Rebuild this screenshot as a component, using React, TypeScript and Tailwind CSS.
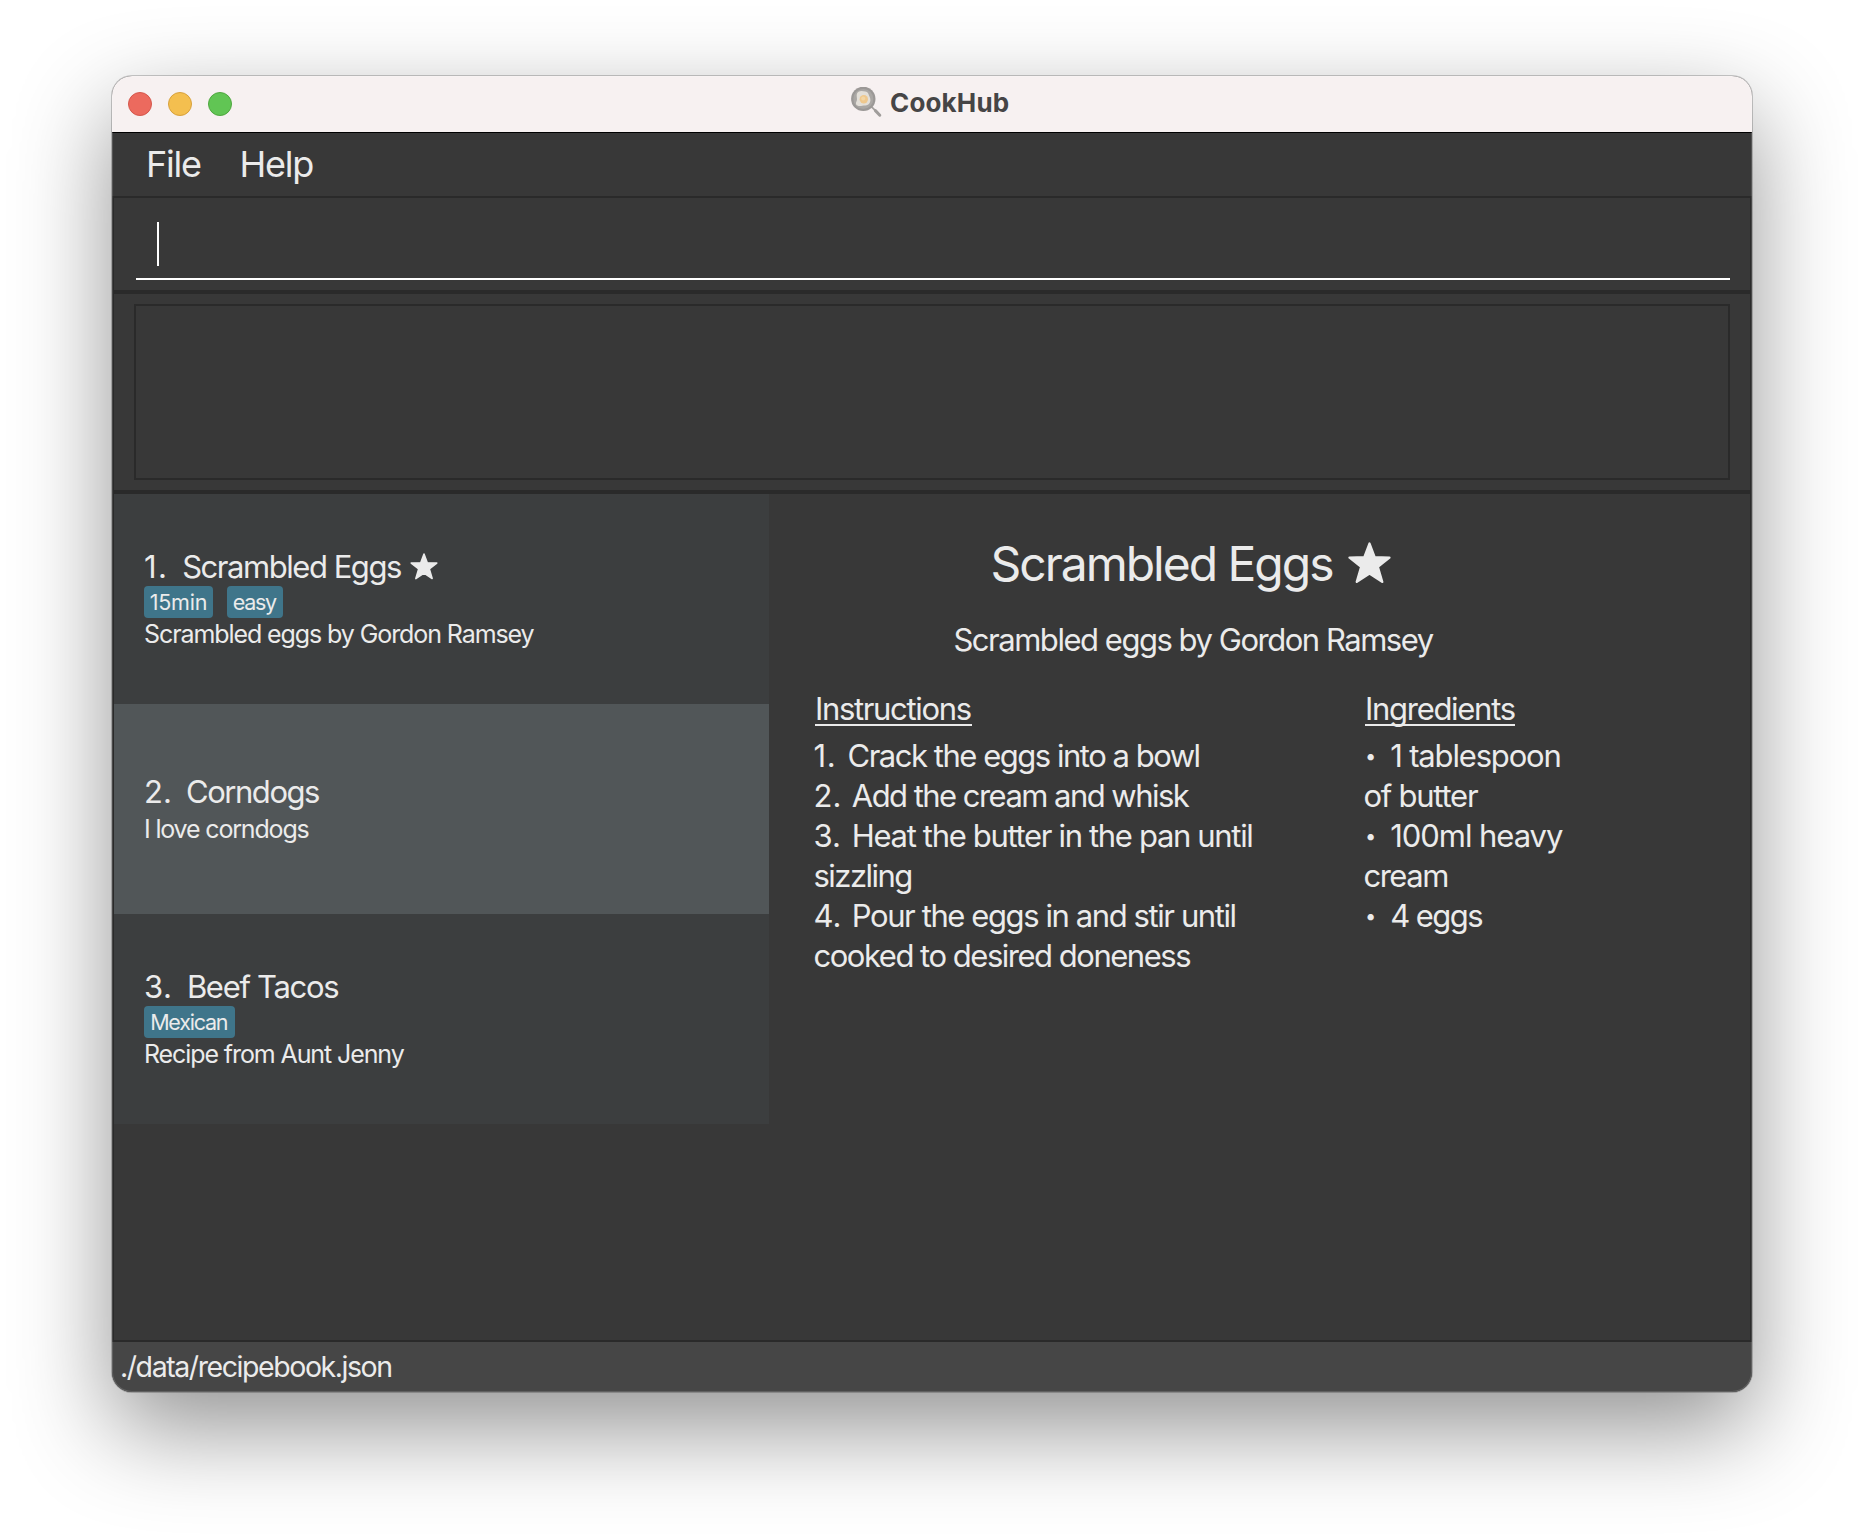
function Star({ className }: { className: string }) {
  return (
    <svg viewBox="0 0 43 42" className={className} fill="currentColor" stroke="currentColor" strokeWidth="2.4" strokeLinejoin="round">
      <path d="M21.5 1.6 26.6 15.2 41.4 15.6 29.8 24.8 34.2 39.8 21.5 31.4 8.800 39.8 13.2 24.8 1.6 15.6 16.4 15.2Z" />
    </svg>
  );
}

function PanIcon() {
  return (
    <svg viewBox="0 0 32 32" className="h-8 w-8">
      <path d="M21.4 19.6 25.600 23.800" stroke="#a3a09e" strokeWidth="1.8" />
      <path d="M25.400 23.600 29.800 28.200" stroke="#a09d9b" strokeWidth="3" strokeLinecap="round" />
      <circle cx="13.3" cy="11.9" r="12.2" fill="#9b9896" />
      <circle cx="13.3" cy="11.9" r="10" fill="#aaa7a4" />
      <path d="M8.500 4.800C10.500 3.400 13.500 4.200 15.300 4.600 18.500 5.200 18.600 7.500 19.500 9.600 20.800 12.300 20.800 15 19 16.900 17 18.800 14.500 18.200 12.200 18.800 9.800 19.400 6.600 19.200 6 17 5.500 15.100 7.100 14.200 7 11.900 6.900 9.500 5.900 6.700 8.500 4.800Z" fill="#e3dfd8" />
      <circle cx="13.800" cy="12.300" r="4.200" fill="#efc88d" />
      <circle cx="13.200" cy="11.600" r="2" fill="#f3d6a4" />
    </svg>
  );
}

const recipes = [
  {
    id: "1.", idClass: "w-[38.2px] tracking-[1.3px]", name: "Scrambled Eggs", nameClass: "tracking-[-1.46px]", star: true, bg: "bg-[#3c3e3f]",
    tags: [
      { label: "15min", cls: "w-[69px] pl-[5.7px] tracking-[-0.21px]" },
      { label: "easy", cls: "w-14 pl-[5.7px] tracking-[-1.29px]" },
    ],
    desc: "Scrambled eggs by Gordon Ramsey", descClass: "tracking-[-1.09px]",
  },
  {
    id: "2.", idClass: "w-[42px]", name: "Corndogs", nameClass: "tracking-[-1.46px]", star: false, bg: "bg-[#515658]",
    tags: [], desc: "I love corndogs", descClass: "tracking-[-1.17px]",
  },
  {
    id: "3.", idClass: "w-[42.9px] tracking-[0.5px]", name: "Beef Tacos", nameClass: "tracking-[-1.31px]", star: false, bg: "bg-[#3c3e3f]",
    tags: [{ label: "Mexican", cls: "w-[91px] pl-[6.2px] tracking-[-1.24px]" }],
    desc: "Recipe from Aunt Jenny", descClass: "tracking-[-1.1px]",
  },
];

const instructions = [
  { n: "1.", nClass: "w-[34px] tracking-[0.7px]", text: "Crack the eggs into a bowl", cls: "tracking-[-1.48px]" },
  { n: "2.", nClass: "w-[38.3px]", text: "Add the cream and whisk", cls: "tracking-[-1.54px]" },
  { n: "3.", nClass: "w-[38.3px]", text: "Heat the butter in the pan until", cls: "tracking-[-1.33px]" },
  { n: "", nClass: "", text: "sizzling", cls: "tracking-[-1.52px]" },
  { n: "4.", nClass: "w-[38.3px]", text: "Pour the eggs in and stir until", cls: "tracking-[-1.41px]" },
  { n: "", nClass: "", text: "cooked to desired doneness", cls: "tracking-[-1.48px]" },
];

const ingredients = [
  { bullet: true, text: "1 tablespoon", cls: "tracking-[-1.16px]" },
  { bullet: false, text: "of butter", cls: "tracking-[-1.25px]" },
  { bullet: true, text: "100ml heavy", cls: "tracking-[-1.04px]" },
  { bullet: false, text: "cream", cls: "tracking-[-1.5px]" },
  { bullet: true, text: "4 eggs", cls: "tracking-[-1.55px]" },
];

export default function App() {
  return (
    <div className="h-[1540px] w-[1864px] overflow-hidden bg-white px-28 pt-[76px] font-[Inter,sans-serif] text-[#ebebeb]">
      <div className="relative flex h-[1316px] w-[1640px] flex-col rounded-[20px] bg-[#383838] shadow-[0_0_0_1px_rgba(0,0,0,0.2),0_36px_96px_rgba(0,0,0,0.43)]">
        <header className="relative flex h-[57px] items-start justify-center rounded-t-[20px] border-b border-black bg-[#f7f1f1]">
          <div className="absolute left-4 top-4 flex gap-4">
            <span className="h-6 w-6 rounded-full border border-[#d5574c] bg-[#ec6a5e]" />
            <span className="h-6 w-6 rounded-full border border-[#d8a13c] bg-[#f4bf4f]" />
            <span className="h-6 w-6 rounded-full border border-[#4fa73f] bg-[#61c554]" />
          </div>
          <div className="flex w-[164px] pt-[11px]">
            <PanIcon />
            <span className="-mt-[11px] ml-2 text-[26px] font-bold leading-[53px] tracking-[0.15px] text-[#464546]">CookHub</span>
          </div>
        </header>

        <nav className="flex h-[63px] pl-[34px] text-[36px] leading-[62px]">
          <span className="w-[93.500px] tracking-[-1.25px]">File</span>
          <span className="tracking-[-1.25px]">Help</span>
        </nav>

        <div className="flex flex-1 flex-col border-x-2 border-t-2 border-[#2a2a2a]">
          <div className="h-[92px] pl-[22px] pr-5 pt-6">
            <div className="h-[58px] border-b-2 border-white pl-[21px]">
              <div className="h-11 w-0.5 bg-white" />
            </div>
          </div>
          <div className="h-[204px] border-y-4 border-[#2a2a2a] px-5 py-[10px]">
            <div className="h-[176px] border-2 border-[#2a2a2a]" />
          </div>

          <main className="flex flex-1">
            <ul className="w-[655px]">
              {recipes.map((r) => (
                <li key={r.id} className={`flex h-[210px] flex-col justify-center pl-[30px] ${r.bg}`}>
                  <div className="flex h-[38px] items-start text-[31px] leading-[38px]">
                    <span className={r.idClass}>{r.id}</span>
                    <span className={r.nameClass}>{r.name}</span>
                    {r.star && <Star className="ml-[9.500px] mt-[5px] h-[27px] w-[28px]" />}
                  </div>
                  {r.tags.length > 0 ? (
                    <div className="flex gap-3.5">
                      {r.tags.map((t) => (
                        <span key={t.label} className={`h-8 rounded-[4px] bg-[#3f758a] text-[21.5px] leading-8 ${t.cls}`}>{t.label}</span>
                      ))}
                    </div>
                  ) : (
                    <div className="h-0.5" />
                  )}
                  <p className={`h-8 text-[25px] leading-8 ${r.descClass}`}>{r.desc}</p>
                </li>
              ))}
            </ul>

            <section className="flex-1 pt-10">
              <h1 className="flex h-[60px] pl-[221.500px] text-[48px] leading-[60px] tracking-[-2.02px]">
                <span className="w-[357.500px]">Scrambled Eggs</span>
                <Star className="mt-2 h-[42px] w-[43px]" />
              </h1>
              <p className="mt-[26px] h-10 pl-[184.400px] text-[31px] leading-10 tracking-[-1.47px]">Scrambled eggs by Gordon Ramsey</p>
              <div className="mt-[29px] flex pl-[44.500px] text-[31px] leading-10">
                <div className="w-[550px]">
                  <h2 className="ml-[1.500px] h-[37px] w-[156.500px] border-b-2 border-[#ebebeb] leading-[39px] tracking-[-1.34px]">Instructions</h2>
                  <div className="mt-2.5">
                    {instructions.map((l) => (
                      <div key={l.text} className="flex h-10 whitespace-nowrap">
                        {l.n && <span className={l.nClass}>{l.n}</span>}
                        <span className={l.cls}>{l.text}</span>
                      </div>
                    ))}
                  </div>
                </div>
                <div>
                  <h2 className="ml-[1.500px] h-[37px] w-[150px] border-b-2 border-[#ebebeb] leading-[39px] tracking-[-1.29px]">Ingredients</h2>
                  <div className="mt-2.5">
                    {ingredients.map((l) => (
                      <div key={l.text} className="flex h-10 whitespace-nowrap">
                        {l.bullet && <span className="w-[26.700px] pl-[1.500px] text-[20px]">•</span>}
                        <span className={l.cls}>{l.text}</span>
                      </div>
                    ))}
                  </div>
                </div>
              </div>
            </section>
          </main>
        </div>

        <footer className="h-[52px] rounded-b-[20px] border-t-2 border-[#2a2a2a] bg-[#464646] pl-2 text-[28.5px] leading-[50px] tracking-[-1.43px]">
          ./data/recipebook.json
        </footer>
        <div className="pointer-events-none absolute inset-0 rounded-[20px] shadow-[inset_0_0_0_1px_rgba(255,255,255,0.14)]" />
      </div>
    </div>
  );
}
